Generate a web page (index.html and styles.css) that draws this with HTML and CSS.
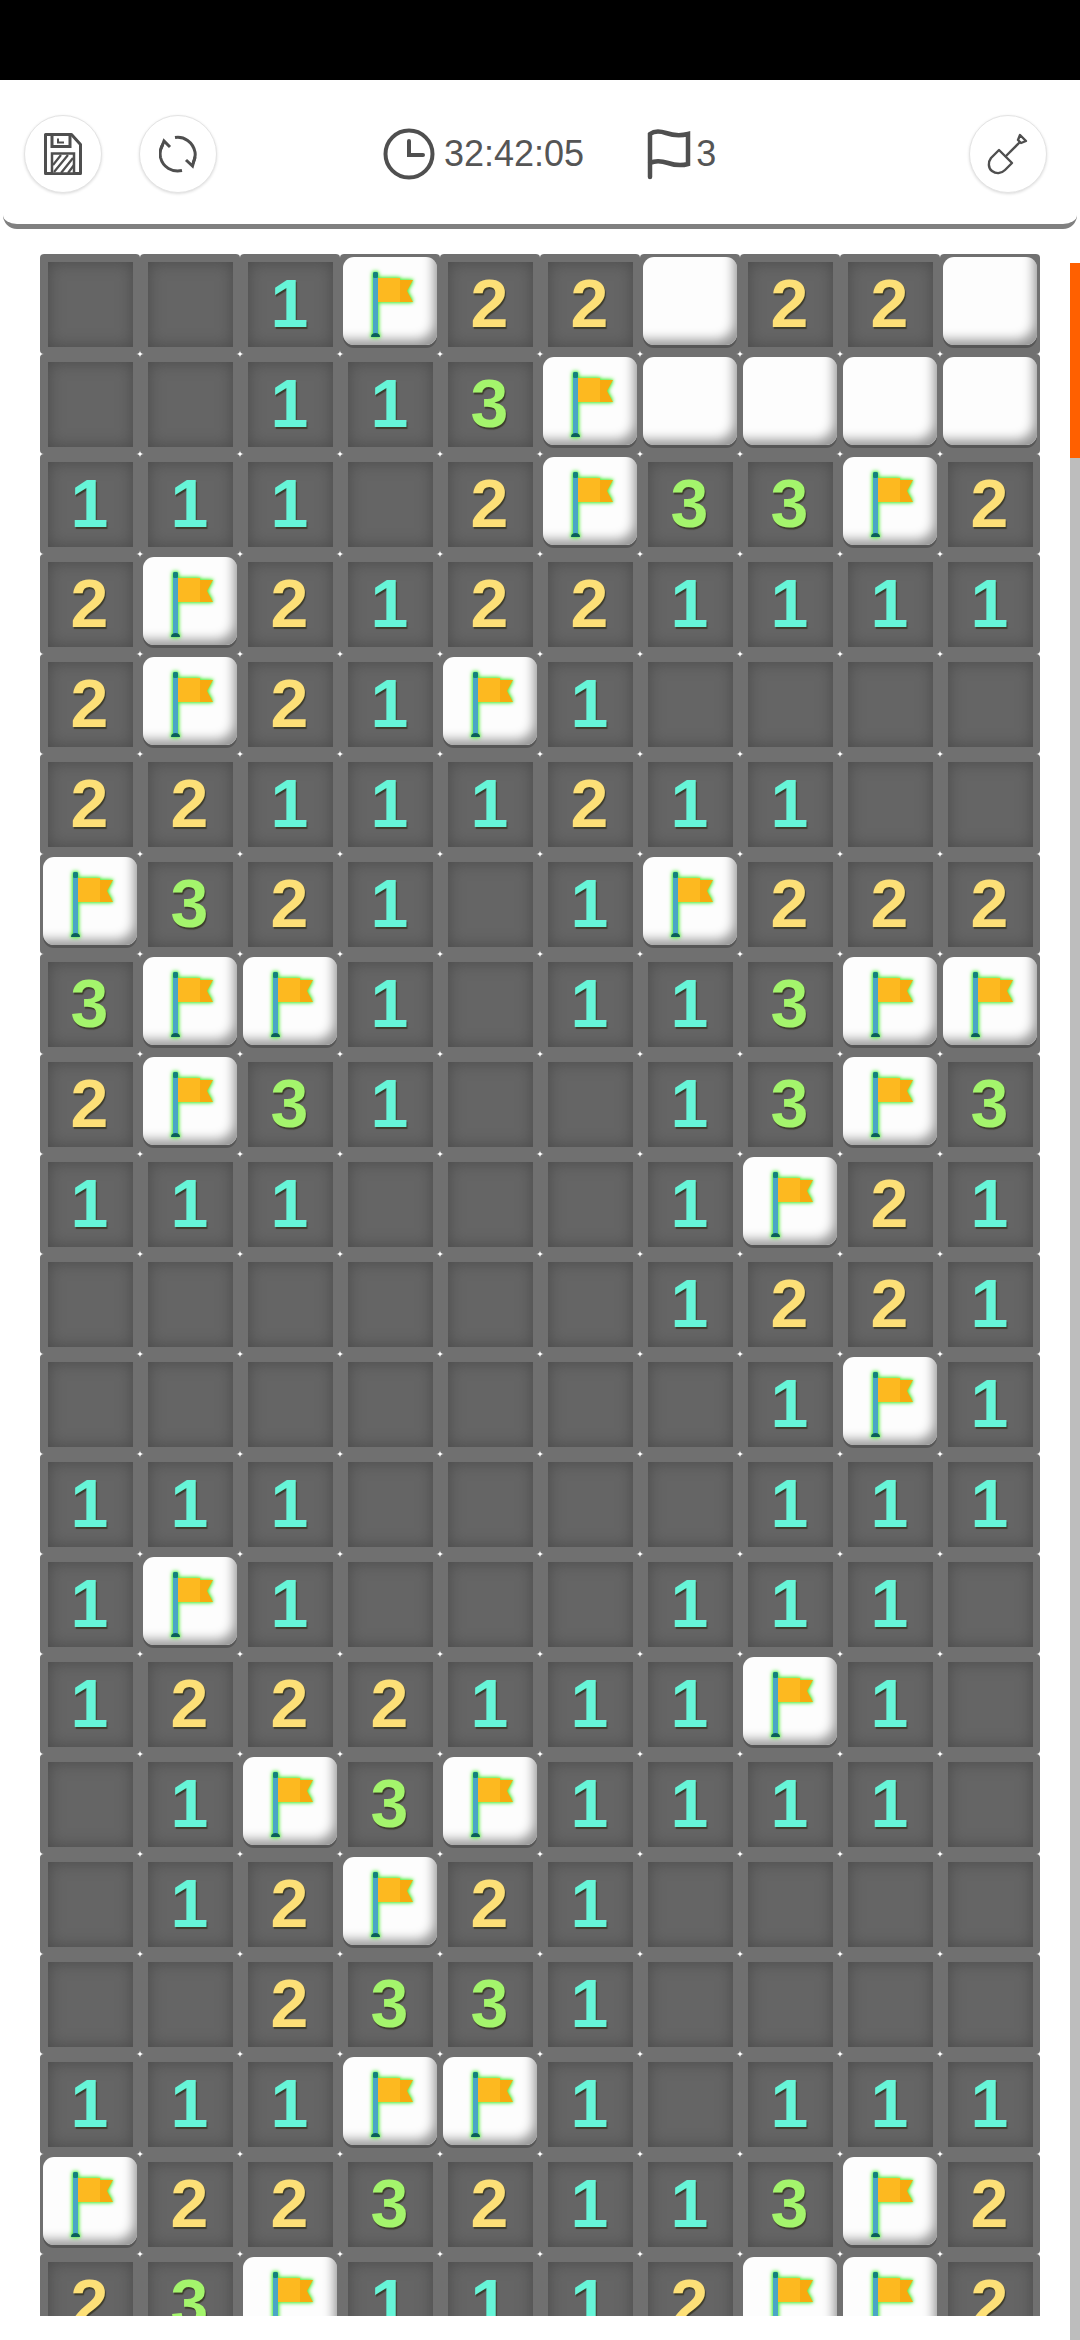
FILE: index.html
```html
<!DOCTYPE html>
<html lang="en">
<head>
<meta charset="utf-8">
<title>Minesweeper</title>
<link rel="stylesheet" href="styles.css">
</head>
<body>
<svg class="defs" width="0" height="0" aria-hidden="true">
  <defs>
    <symbol id="flag" viewBox="0 0 100 100">
      <rect x="33" y="18" width="5" height="65" rx="1.500" fill="#4aa5c6"/>
      <rect x="33" y="18" width="5" height="6" rx="1.500" fill="#14807c"/>
      <path d="M31 83c0-3 2-4 4.500-4s4.500 1 4.500 4z" fill="#0c5f5c"/>
      <path d="M59 26h14l-6 11 6 11H59z" fill="#f8a90f"/>
      <rect x="38" y="24" width="22" height="24" fill="#fdb920"/>
    </symbol>
  </defs>
</svg>
<div class="status"></div>
<header class="bar">
  <button class="round" aria-label="save">
    <svg width="38" height="42" viewBox="0 0 38 42" fill="none" stroke="#4f4f4f" stroke-width="3">
      <path d="M1.500 1.500h26l9 10v29h-35z" stroke-linejoin="round"/>
      <path d="M8 1.500v12h18v-12"/>
      <path d="M14 5.500v4h6" stroke-width="2"/>
      <rect x="8" y="20.500" width="22" height="20" fill="#fff" stroke-width="2.500"/>
      <path d="M9 32l8-10M10 39l14-17M17 40l12-15M24 40l6-8" stroke-width="2.200"/>
    </svg>
  </button>
  <button class="round" aria-label="restart">
    <svg width="38" height="38" viewBox="0 0 38 38" fill="none" stroke="#4f4f4f" stroke-width="3">
      <path d="M16 2.500C25 1 34 7 36 17c0.600 4 0 7.500-2 11"/>
      <path d="M27 25l6.500 6 2.500-9"/>
      <path d="M23 35.500c-10 2-19-3-21.500-13-1-5-0.500-9 2.500-13.500"/>
      <path d="M11 12L5 6 2 14"/>
    </svg>
  </button>
  <div class="stats">
    <div class="stat">
      <svg width="52" height="52" viewBox="0 0 52 52" fill="none" stroke="#4f4f4f" stroke-width="4">
        <circle cx="26" cy="26" r="23.500"/>
        <path d="M26 13v14h14" stroke-linecap="round"/>
      </svg>
      <span>32:42:05</span>
    </div>
    <div class="stat">
      <svg width="44" height="52" viewBox="0 0 44 52" fill="none" stroke="#4f4f4f" stroke-width="4.500" stroke-linecap="round">
        <path d="M3 49V6c4-3 10-3 16-1s14 3 22 1v30c-7 2-14 1-20-1s-12-3-18 0"/>
      </svg>
      <span>3</span>
    </div>
  </div>
  <button class="round" aria-label="dig">
    <svg width="42" height="42" viewBox="0 0 42 42" fill="none" stroke="#4f4f4f" stroke-width="2.400" stroke-linejoin="round">
      <path d="M33 9L18 24"/>
      <path d="M31 7l2-5 6 6-5 2z"/>
      <path d="M12 17l13 13-7 7c-4 4-9 4-13 1s-4-9-1-13z"/>
    </svg>
  </button>
</header>
<main class="board">
<div class="cell"></div><div class="cell"></div><div class="cell c1">1</div><div class="cell f"><svg><use href="#flag"/></svg></div><div class="cell c2">2</div><div class="cell c2">2</div><div class="cell w"></div><div class="cell c2">2</div><div class="cell c2">2</div><div class="cell w"></div>
<div class="cell"></div><div class="cell"></div><div class="cell c1">1</div><div class="cell c1">1</div><div class="cell c3">3</div><div class="cell f"><svg><use href="#flag"/></svg></div><div class="cell w"></div><div class="cell w"></div><div class="cell w"></div><div class="cell w"></div>
<div class="cell c1">1</div><div class="cell c1">1</div><div class="cell c1">1</div><div class="cell"></div><div class="cell c2">2</div><div class="cell f"><svg><use href="#flag"/></svg></div><div class="cell c3">3</div><div class="cell c3">3</div><div class="cell f"><svg><use href="#flag"/></svg></div><div class="cell c2">2</div>
<div class="cell c2">2</div><div class="cell f"><svg><use href="#flag"/></svg></div><div class="cell c2">2</div><div class="cell c1">1</div><div class="cell c2">2</div><div class="cell c2">2</div><div class="cell c1">1</div><div class="cell c1">1</div><div class="cell c1">1</div><div class="cell c1">1</div>
<div class="cell c2">2</div><div class="cell f"><svg><use href="#flag"/></svg></div><div class="cell c2">2</div><div class="cell c1">1</div><div class="cell f"><svg><use href="#flag"/></svg></div><div class="cell c1">1</div><div class="cell"></div><div class="cell"></div><div class="cell"></div><div class="cell"></div>
<div class="cell c2">2</div><div class="cell c2">2</div><div class="cell c1">1</div><div class="cell c1">1</div><div class="cell c1">1</div><div class="cell c2">2</div><div class="cell c1">1</div><div class="cell c1">1</div><div class="cell"></div><div class="cell"></div>
<div class="cell f"><svg><use href="#flag"/></svg></div><div class="cell c3">3</div><div class="cell c2">2</div><div class="cell c1">1</div><div class="cell"></div><div class="cell c1">1</div><div class="cell f"><svg><use href="#flag"/></svg></div><div class="cell c2">2</div><div class="cell c2">2</div><div class="cell c2">2</div>
<div class="cell c3">3</div><div class="cell f"><svg><use href="#flag"/></svg></div><div class="cell f"><svg><use href="#flag"/></svg></div><div class="cell c1">1</div><div class="cell"></div><div class="cell c1">1</div><div class="cell c1">1</div><div class="cell c3">3</div><div class="cell f"><svg><use href="#flag"/></svg></div><div class="cell f"><svg><use href="#flag"/></svg></div>
<div class="cell c2">2</div><div class="cell f"><svg><use href="#flag"/></svg></div><div class="cell c3">3</div><div class="cell c1">1</div><div class="cell"></div><div class="cell"></div><div class="cell c1">1</div><div class="cell c3">3</div><div class="cell f"><svg><use href="#flag"/></svg></div><div class="cell c3">3</div>
<div class="cell c1">1</div><div class="cell c1">1</div><div class="cell c1">1</div><div class="cell"></div><div class="cell"></div><div class="cell"></div><div class="cell c1">1</div><div class="cell f"><svg><use href="#flag"/></svg></div><div class="cell c2">2</div><div class="cell c1">1</div>
<div class="cell"></div><div class="cell"></div><div class="cell"></div><div class="cell"></div><div class="cell"></div><div class="cell"></div><div class="cell c1">1</div><div class="cell c2">2</div><div class="cell c2">2</div><div class="cell c1">1</div>
<div class="cell"></div><div class="cell"></div><div class="cell"></div><div class="cell"></div><div class="cell"></div><div class="cell"></div><div class="cell"></div><div class="cell c1">1</div><div class="cell f"><svg><use href="#flag"/></svg></div><div class="cell c1">1</div>
<div class="cell c1">1</div><div class="cell c1">1</div><div class="cell c1">1</div><div class="cell"></div><div class="cell"></div><div class="cell"></div><div class="cell"></div><div class="cell c1">1</div><div class="cell c1">1</div><div class="cell c1">1</div>
<div class="cell c1">1</div><div class="cell f"><svg><use href="#flag"/></svg></div><div class="cell c1">1</div><div class="cell"></div><div class="cell"></div><div class="cell"></div><div class="cell c1">1</div><div class="cell c1">1</div><div class="cell c1">1</div><div class="cell"></div>
<div class="cell c1">1</div><div class="cell c2">2</div><div class="cell c2">2</div><div class="cell c2">2</div><div class="cell c1">1</div><div class="cell c1">1</div><div class="cell c1">1</div><div class="cell f"><svg><use href="#flag"/></svg></div><div class="cell c1">1</div><div class="cell"></div>
<div class="cell"></div><div class="cell c1">1</div><div class="cell f"><svg><use href="#flag"/></svg></div><div class="cell c3">3</div><div class="cell f"><svg><use href="#flag"/></svg></div><div class="cell c1">1</div><div class="cell c1">1</div><div class="cell c1">1</div><div class="cell c1">1</div><div class="cell"></div>
<div class="cell"></div><div class="cell c1">1</div><div class="cell c2">2</div><div class="cell f"><svg><use href="#flag"/></svg></div><div class="cell c2">2</div><div class="cell c1">1</div><div class="cell"></div><div class="cell"></div><div class="cell"></div><div class="cell"></div>
<div class="cell"></div><div class="cell"></div><div class="cell c2">2</div><div class="cell c3">3</div><div class="cell c3">3</div><div class="cell c1">1</div><div class="cell"></div><div class="cell"></div><div class="cell"></div><div class="cell"></div>
<div class="cell c1">1</div><div class="cell c1">1</div><div class="cell c1">1</div><div class="cell f"><svg><use href="#flag"/></svg></div><div class="cell f"><svg><use href="#flag"/></svg></div><div class="cell c1">1</div><div class="cell"></div><div class="cell c1">1</div><div class="cell c1">1</div><div class="cell c1">1</div>
<div class="cell f"><svg><use href="#flag"/></svg></div><div class="cell c2">2</div><div class="cell c2">2</div><div class="cell c3">3</div><div class="cell c2">2</div><div class="cell c1">1</div><div class="cell c1">1</div><div class="cell c3">3</div><div class="cell f"><svg><use href="#flag"/></svg></div><div class="cell c2">2</div>
<div class="cell c2">2</div><div class="cell c3">3</div><div class="cell f"><svg><use href="#flag"/></svg></div><div class="cell c1">1</div><div class="cell c1">1</div><div class="cell c1">1</div><div class="cell c2">2</div><div class="cell f"><svg><use href="#flag"/></svg></div><div class="cell f"><svg><use href="#flag"/></svg></div><div class="cell c2">2</div>
</main>
<div class="scroll"><div class="thumb"></div></div>
</body>
</html>
```
FILE: styles.css
```css
html, body {
  margin: 0;
  padding: 0;
  background: #fff;
}
body {
  position: relative;
  width: 1080px;
  height: 2340px;
  overflow: hidden;
  font-family: "Liberation Sans", Arial, sans-serif;
}
.defs {
  position: absolute;
}
.status {
  height: 80px;
  background: #000;
}
.bar {
  box-sizing: border-box;
  height: 149px;
  margin: 0 3px;
  padding: 4px 30px 0 21px;
  display: flex;
  align-items: center;
  background: #fff;
  border-bottom: 5px solid #808080;
  border-radius: 0 0 14px 14px;
}
.round {
  box-sizing: border-box;
  width: 78px;
  height: 78px;
  flex: none;
  padding: 0;
  display: flex;
  align-items: center;
  justify-content: center;
  background: #fff;
  border: 1px solid #e4e4e4;
  border-radius: 50%;
  box-shadow: 0 1px 3px rgba(0, 0, 0, 0.14);
}
.round + .round {
  margin-left: 37px;
}
.stats {
  flex: 1;
  display: flex;
  align-items: center;
  gap: 63px;
  padding-left: 166px;
}
.stat {
  display: flex;
  align-items: center;
  gap: 9px;
  color: #555;
  font-size: 36px;
}
.stat + .stat {
  gap: 5px;
}
.board {
  display: grid;
  grid-template-columns: repeat(10, 100px);
  grid-auto-rows: 100px;
  width: 1000px;
  height: 2062px;
  margin: 25px 0 0 40px;
  overflow: hidden;
}
.cell {
  box-sizing: border-box;
  position: relative;
  isolation: isolate;
  display: flex;
  align-items: center;
  justify-content: center;
  padding: 0 1px 3px 0;
  font-size: 68px;
  font-weight: 700;
  text-shadow: 1px 2px 1px #3c3c2c;
  border-radius: 4px;
  background: #707070;
}
.cell::before {
  content: "";
  position: absolute;
  z-index: -1;
  left: 8px;
  top: 8px;
  width: 85px;
  height: 85px;
  background: #656565;
  box-shadow: inset 0 0 16px #4a4a4a;
}
.c1 { color: #66f5d8; }
.c2 { color: #fde077; }
.c3 { color: #a4f56c; }
.w::before,
.f::before {
  left: 3px;
  top: 3px;
  width: 94px;
  height: 88px;
  background: #fdfdfd;
  border-radius: 11px;
  box-shadow:
    0 3px 0 #565656,
    inset -10px -12px 11px -7px #969696;
}
.f svg {
  position: absolute;
  left: 0;
  top: 0;
  width: 100px;
  height: 100px;
  filter: drop-shadow(0 0 2px #5ff04a) drop-shadow(0 0 1px #5ff04a);
}
.scroll {
  position: absolute;
  right: 0;
  top: 263px;
  bottom: 0;
  width: 10px;
  background: #bdbdbd;
}
.thumb {
  height: 195px;
  background: #ff6000;
}
```
